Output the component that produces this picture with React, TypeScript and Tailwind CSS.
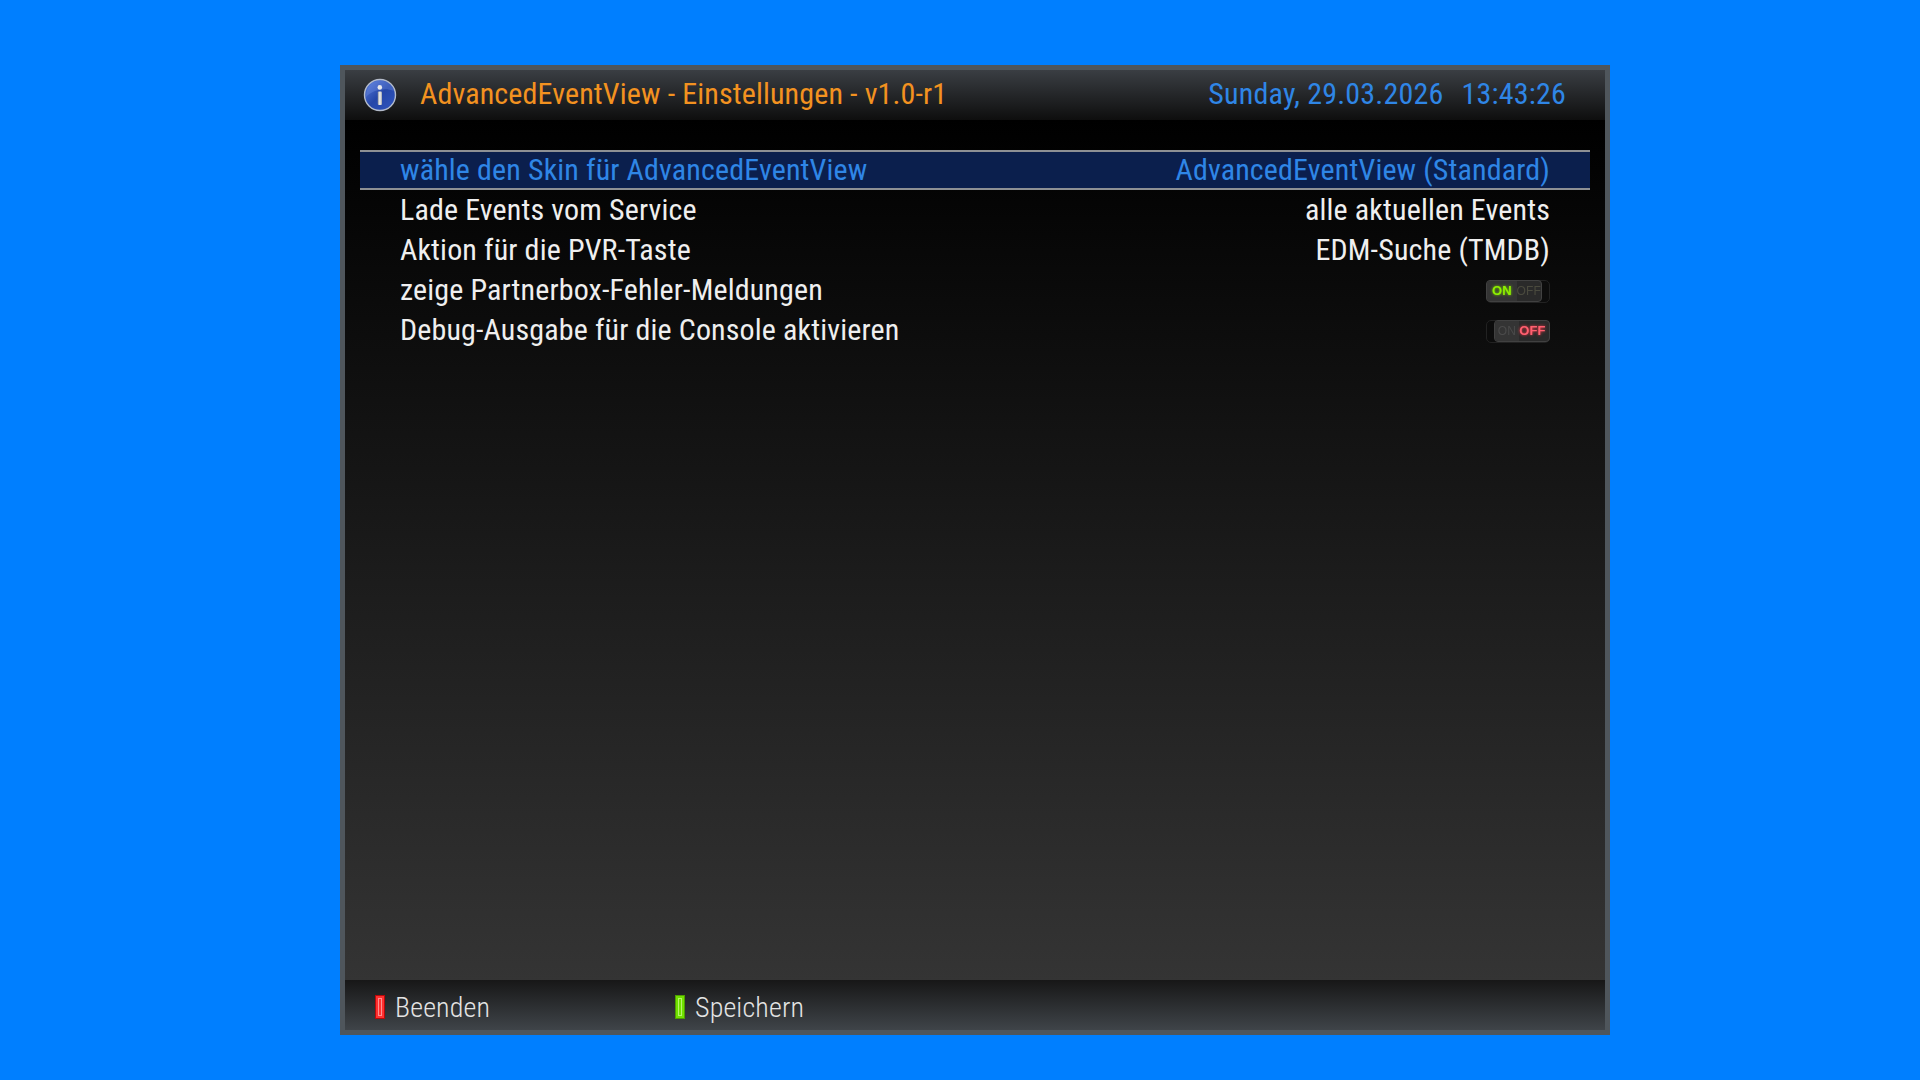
import React from 'react';

const rows = [
  { label: 'Lade Events vom Service', value: 'alle aktuellen Events' },
  { label: 'Aktion für die PVR-Taste', value: 'EDM-Suche (TMDB)' },
  { label: 'zeige Partnerbox-Fehler-Meldungen', toggle: 'on' },
  { label: 'Debug-Ausgabe für die Console aktivieren', toggle: 'off' },
];

function InfoIcon() {
  return (
    <svg width="34" height="34" viewBox="0 0 34 34">
      <defs>
        <linearGradient id="infoFill" x1="0" y1="0" x2="1" y2="1">
          <stop offset="0" stopColor="#5a7fe0" />
          <stop offset="0.5" stopColor="#2546a8" />
          <stop offset="1" stopColor="#2f56c0" />
        </linearGradient>
        <linearGradient id="infoBar" x1="0" y1="0" x2="1" y2="0">
          <stop offset="0" stopColor="#8f949c" />
          <stop offset="0.5" stopColor="#f4f5f7" />
          <stop offset="1" stopColor="#9ea3aa" />
        </linearGradient>
      </defs>
      <circle cx="17" cy="17" r="15.5" fill="url(#infoFill)" stroke="#b4bccb" strokeWidth="1.4" />
      <path d="M3 19 C9 12 22 9 31 13 C30 7 24 2.5 17 2.5 C9 2.5 3 9 3 19 Z" fill="#7d9bea" opacity="0.3" />
      <circle cx="16.8" cy="9.4" r="2.3" fill="#e6e8ec" />
      <rect x="14.8" y="13.4" width="4.2" height="13.6" rx="1" fill="url(#infoBar)" />
    </svg>
  );
}

function Toggle({ state }: { state: string }) {
  const on = state === 'on';
  return (
    <div className="relative mt-[4px] h-[23px] w-[64px]">
      <div className="absolute inset-0 rounded-[5px] border border-[#222222] bg-[#0c0c0c]" />
      <div
        className={
          on
            ? 'absolute left-0 top-0 flex h-[22px] w-[56px] overflow-hidden rounded-[4px] border border-[#414141] bg-[#2a2a2a]'
            : 'absolute right-0 top-0 flex h-[22px] w-[56px] overflow-hidden rounded-[4px] border border-[#414141] bg-[#2a2a2a]'
        }
      >
        <span
          className={
            on
              ? "flex w-[31px] items-center justify-center bg-[#343434] text-[13px] font-black leading-none text-[#8ef000] blur-[0.6px] [font-family:'Liberation_Sans',sans-serif] [text-shadow:0_0_3px_#7ed800]"
              : "flex w-[24px] items-center justify-center bg-[#343434] text-[12px] leading-none text-[#4a4a4a] blur-[0.7px] [font-family:'Liberation_Sans',sans-serif]"
          }
        >
          ON
        </span>
        <span
          className={
            on
              ? "flex flex-1 items-center justify-center text-[12px] leading-none text-[#4a4a3e] blur-[0.7px] [font-family:'Liberation_Sans',sans-serif]"
              : "flex flex-1 items-center justify-center pr-[3px] text-[13px] font-black leading-none text-[#ff6070] blur-[0.6px] [font-family:'Liberation_Sans',sans-serif] [text-shadow:0_0_3px_#ff3848]"
          }
        >
          OFF
        </span>
      </div>
    </div>
  );
}

function KeyMark({ color }: { color: string }) {
  const red = color === 'red';
  return (
    <div
      className={
        red
          ? 'h-[24px] w-[10px] border-[1px] border-[#b80808] bg-[#ff3030] p-[2px]'
          : 'h-[24px] w-[10px] border-[1px] border-[#4f9e00] bg-[#70e000] p-[2px]'
      }
    >
      <div className={red ? 'h-full w-full border border-[#ff9090]' : 'h-full w-full border border-[#b6f56a]'} />
    </div>
  );
}

export default function App() {
  return (
    <div className="flex h-[1080px] w-[1920px] items-start bg-[#007fff] pl-[340px] pt-[65px] font-[Roboto,sans-serif] [font-stretch:75%]">
      <div className="flex h-[970px] w-[1270px] flex-col border-[5px] border-[#4f565c]">
        <header className="flex h-[50px] shrink-0 items-center bg-linear-to-b/srgb from-[#3a3e43] to-[#0e0e0e] tracking-[0.1px]">
          <div className="ml-[18px] flex w-[34px] shrink-0 items-center justify-center">
            <InfoIcon />
          </div>
          <h1 className="ml-[23px] pb-[3px] text-[30px] font-normal tracking-[0.13px] text-[#f39220]">
            AdvancedEventView - Einstellungen - v1.0-r1
          </h1>
          <div className="ml-auto mr-[39px] flex gap-[18px] pb-[3px] text-[30px] tracking-[0.2px] text-[#2f86e6]">
            <span>Sunday, 29.03.2026</span>
            <span>13:43:26</span>
          </div>
        </header>

        <main className="min-h-0 flex-1 bg-linear-to-b/srgb from-black to-[#343434] px-[15px] pt-[30px] tracking-[0.14px]">
          <div className="flex h-[40px] items-center justify-between border-y-[2px] border-[#8e9094] bg-[#0b1f4d] px-[40px] pb-[2px] text-[30px] text-[#2f86e6]">
            <span>wähle den Skin für AdvancedEventView</span>
            <span>AdvancedEventView (Standard)</span>
          </div>
          {rows.map((row) => (
            <div
              key={row.label}
              className="flex h-[40px] items-center justify-between px-[40px] pb-[2px] text-[30px] text-[#efefef]"
            >
              <span>{row.label}</span>
              {row.toggle ? <Toggle state={row.toggle} /> : <span>{row.value}</span>}
            </div>
          ))}
        </main>

        <footer className="flex h-[50px] shrink-0 items-center bg-linear-to-b/srgb from-[#171717] to-[#3f4449] pl-[30px] pt-[4px] text-[28px] font-light tracking-[0.15px] text-[#e4e4e4]">
          <div className="flex w-[300px] items-center gap-[10px]">
            <KeyMark color="red" />
            <span className="pt-[2px]">Beenden</span>
          </div>
          <div className="flex items-center gap-[10px]">
            <KeyMark color="green" />
            <span className="pt-[2px]">Speichern</span>
          </div>
        </footer>
      </div>
    </div>
  );
}
